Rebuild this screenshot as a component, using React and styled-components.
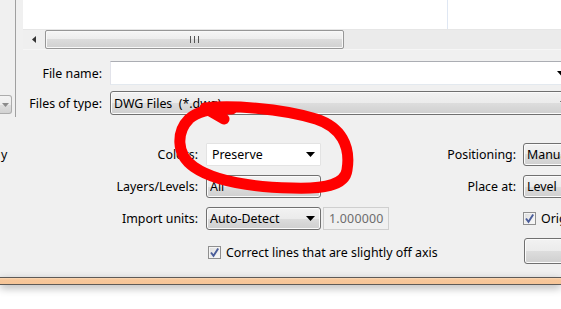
import React from "react";
import styled, { createGlobalStyle } from "styled-components";

const GlobalStyle = createGlobalStyle`
  html, body {
    margin: 0;
    padding: 0;
    background: #ffffff;
  }
  body {
    font-family: "Noto Sans", "Open Sans", "DejaVu Sans", sans-serif;
    font-size: 12.4px;
    color: #000;
  }
`;

const Page = styled.div`
  width: 561px;
  height: 309px;
  position: relative;
  overflow: hidden;
  background: #ffffff;
`;

const Dialog = styled.div`
  height: 277px;
  background: #f0f0f0;
  display: flex;
  flex-direction: column;
`;

const ChooserPane = styled.div`
  height: 117px;
  display: flex;
`;

const Sidebar = styled.div`
  width: 16px;
  border-right: 1px solid #a0a0a0;
  display: flex;
  flex-direction: column;
  justify-content: flex-end;
  padding-bottom: 3px;
  box-sizing: border-box;
`;

const SideCombo = styled.div`
  width: 12px;
  height: 19px;
  box-sizing: border-box;
  border: 1px solid #acacac;
  border-left: none;
  border-radius: 0 3px 3px 0;
  background: linear-gradient(#f4f4f4 0%, #ececec 50%, #dedede 50%, #d2d2d2 100%);
  display: flex;
  align-items: center;
  justify-content: center;
`;

const ChooserMain = styled.div`
  flex: 1;
  padding-left: 7px;
  display: flex;
  flex-direction: column;
  min-width: 0;
`;

const FileList = styled.div`
  height: 29px;
  background: #ffffff;
  display: flex;
`;

const ListColumn = styled.div`
  width: 424px;
  border-right: 1px solid #dfe7f3;
`;

const HScroll = styled.div`
  height: 21px;
  box-sizing: border-box;
  background: #ebebeb;
  border-top: 1px solid #e6e6e6;
  border-bottom: 1px solid #f6f6f6;
  display: flex;
  align-items: center;
`;

const ScrollArrow = styled.div`
  width: 22px;
  height: 100%;
  display: flex;
  align-items: center;
  justify-content: center;
  background: #efefef;
`;

const Thumb = styled.div`
  width: 299px;
  height: 19px;
  box-sizing: border-box;
  border: 1px solid #979797;
  border-radius: 2px;
  background: linear-gradient(#f6f6f6 0%, #ececec 50%, #dcdcdc 50%, #d0d0d0 100%);
  box-shadow: inset 0 0 0 1px #f8f8f8;
  display: flex;
  align-items: center;
  justify-content: center;
  gap: 3px;
`;

const Grip = styled.span`
  width: 1px;
  height: 7px;
  background: #555;
`;

const FieldRows = styled.div`
  margin-top: 11px;
  display: flex;
  flex-direction: column;
  gap: 6px;
`;

const FieldRow = styled.div`
  display: grid;
  grid-template-columns: 79px calc(100% - 73px);
  column-gap: 8px;
  align-items: center;
  height: 24px;
`;

const Label = styled.div`
  text-align: right;
  white-space: nowrap;
  padding-right: ${({ $pad }) => $pad || 0}px;
`;

const TextBox = styled.div`
  height: 24px;
  box-sizing: border-box;
  background: #fff;
  border: 1px solid #e2e3ea;
  border-top-color: #abadb3;
  border-bottom-color: #e3e9ef;
  display: flex;
  align-items: center;
  justify-content: flex-end;
  padding-right: 8px;
`;

const Combo = styled.div`
  height: ${({ $h }) => $h || 23}px;
  box-sizing: border-box;
  border: 1px solid ${({ $plain }) => ($plain ? "#e3e3e3" : "#707070")};
  border-radius: ${({ $plain }) => ($plain ? 1 : 3)}px;
  background: ${({ $plain }) =>
    $plain
      ? "#ffffff"
      : "linear-gradient(#f2f2f2 0%, #ebebeb 50%, #dddddd 50%, #cfcfcf 100%)"};
  box-shadow: ${({ $plain }) => ($plain ? "none" : "inset 0 0 0 1px #fbfbfb")};
  display: flex;
  align-items: center;
  padding: 0 5px 0 ${({ $indent }) => $indent || 3}px;
  white-space: nowrap;
  overflow: hidden;
`;

const ComboText = styled.span`
  flex: 1;
  overflow: hidden;
`;

const DisabledField = styled.div`
  margin-left: 2px;
  height: 23px;
  box-sizing: border-box;
  border: 1px solid #cfcfcf;
  background: #f0f0f0;
  color: #6d6d6d;
  display: flex;
  align-items: center;
  padding-left: 5px;
  letter-spacing: 0.2px;
`;

const OptionsGrid = styled.div`
  padding-top: 26px;
  display: grid;
  grid-template-columns: 8px 198px 115px 68px 134px 120px;
  grid-template-rows: 23px 23px 23px 26px;
  row-gap: 9px;
  align-items: center;
`;

const Stub = styled.div`
  grid-column: 1;
  grid-row: 1;
  padding-left: 1px;
`;

const Cell = styled.div`
  grid-column: ${({ $col }) => $col};
  grid-row: ${({ $row }) => $row};
  min-width: 0;
`;

const CheckRow = styled.div`
  display: flex;
  align-items: center;
  gap: 5px;
  white-space: nowrap;
  margin-left: ${({ $offset }) => $offset || 0}px;
`;

const CheckBox = styled.span`
  width: 13px;
  height: 13px;
  box-sizing: border-box;
  border: 1px solid #8f8f8f;
  background: linear-gradient(135deg, #dcdcdc, #fbfbfb);
  box-shadow: inset 0 0 0 1px #f4f4f4;
  display: flex;
  align-items: center;
  justify-content: center;
  flex: none;
`;

const PushButton = styled.div`
  height: 26px;
  margin-top: -3px;
  margin-left: 1px;
  box-sizing: border-box;
  border: 1px solid #707070;
  border-radius: 3px;
  background: linear-gradient(#f2f2f2 0%, #ebebeb 50%, #dddddd 50%, #cfcfcf 100%);
  box-shadow: inset 0 0 0 1px #fbfbfb;
`;

const FrameEdge = styled.div`
  height: 6px;
  border-top: 1px solid #5e5a57;
  border-bottom: 1px solid #5e5a57;
  background: linear-gradient(#fbd8b6 0%, #f7c79a 30%, #f6c597 100%);
  box-shadow: 0 3px 8px rgba(0, 0, 0, 0.3);
`;

const Marker = styled.svg`
  position: absolute;
  inset: 0;
  pointer-events: none;
`;

const DownArrow = () => (
  <svg width="9" height="5" viewBox="0 0 9 5">
    <polygon points="0,0 9,0 4.5,5" fill="#000" />
  </svg>
);

const Check = () => (
  <svg width="11" height="11" viewBox="0 0 11 11">
    <path d="M2 5.5 L4.5 8.8 L9.2 1.5" fill="none" stroke="#4a5d9a" strokeWidth="1.9" />
  </svg>
);

export default function App() {
  return (
    <>
      <GlobalStyle />
      <Page>
        <Dialog>
          <ChooserPane>
            <Sidebar>
              <SideCombo>
                <svg width="7" height="4" viewBox="0 0 7 4">
                  <polygon points="0,0 7,0 3.5,4" fill="#8a8a8a" />
                </svg>
              </SideCombo>
            </Sidebar>
            <ChooserMain>
              <FileList>
                <ListColumn />
              </FileList>
              <HScroll>
                <ScrollArrow>
                  <svg width="4" height="7" viewBox="0 0 4 7">
                    <polygon points="4,0 4,7 0,3.5" fill="#333" />
                  </svg>
                </ScrollArrow>
                <Thumb>
                  <Grip />
                  <Grip />
                  <Grip />
                </Thumb>
              </HScroll>
              <FieldRows>
                <FieldRow>
                  <Label>File name:</Label>
                  <TextBox>
                    <DownArrow />
                  </TextBox>
                </FieldRow>
                <FieldRow>
                  <Label>Files of type:</Label>
                  <Combo $h={24}>
                    <ComboText>DWG Files&nbsp; (*.dwg)</ComboText>
                    <DownArrow />
                  </Combo>
                </FieldRow>
              </FieldRows>
            </ChooserMain>
          </ChooserPane>

          <OptionsGrid>
            <Stub>y</Stub>

            <Cell $col={2} $row={1}>
              <Label $pad={8}>Colors:</Label>
            </Cell>
            <Cell $col={3} $row={1}>
              <Combo $plain $indent={5}>
                <ComboText>Preserve</ComboText>
                <DownArrow />
              </Combo>
            </Cell>
            <Cell $col={5} $row={1}>
              <Label $pad={7}>Positioning:</Label>
            </Cell>
            <Cell $col={6} $row={1}>
              <Combo>
                <ComboText>Manual</ComboText>
              </Combo>
            </Cell>

            <Cell $col={2} $row={2}>
              <Label $pad={8}>Layers/Levels:</Label>
            </Cell>
            <Cell $col={3} $row={2}>
              <Combo>
                <ComboText>All</ComboText>
                <DownArrow />
              </Combo>
            </Cell>
            <Cell $col={5} $row={2}>
              <Label $pad={7}>Place at:</Label>
            </Cell>
            <Cell $col={6} $row={2}>
              <Combo>
                <ComboText>Level</ComboText>
              </Combo>
            </Cell>

            <Cell $col={2} $row={3}>
              <Label $pad={8}>Import units:</Label>
            </Cell>
            <Cell $col={3} $row={3}>
              <Combo>
                <ComboText>Auto-Detect</ComboText>
                <DownArrow />
              </Combo>
            </Cell>
            <Cell $col={4} $row={3}>
              <DisabledField>1.000000</DisabledField>
            </Cell>
            <Cell $col={6} $row={3}>
              <CheckRow>
                <CheckBox>
                  <Check />
                </CheckBox>
                Original position
              </CheckRow>
            </Cell>

            <Cell $col="3 / span 3" $row={4}>
              <CheckRow $offset={2}>
                <CheckBox>
                  <Check />
                </CheckBox>
                Correct lines that are slightly off axis
              </CheckRow>
            </Cell>
            <Cell $col={6} $row={4}>
              <PushButton />
            </Cell>
          </OptionsGrid>
        </Dialog>
        <FrameEdge />

        <Marker width="561" height="309" viewBox="0 0 561 309">
          <path
            d="M224 119 L205 108 C230 105 280 108 316 119 C341 127 351 146 347 170 C345 186 322 189 292 188 C252 187 214 181 194 167 C175 154 177 131 189 119 C198 111 214 108 232 109"
            fill="none"
            stroke="#ff0000"
            strokeWidth="11"
            strokeLinecap="round"
            strokeLinejoin="round"
          />
        </Marker>
      </Page>
    </>
  );
}
